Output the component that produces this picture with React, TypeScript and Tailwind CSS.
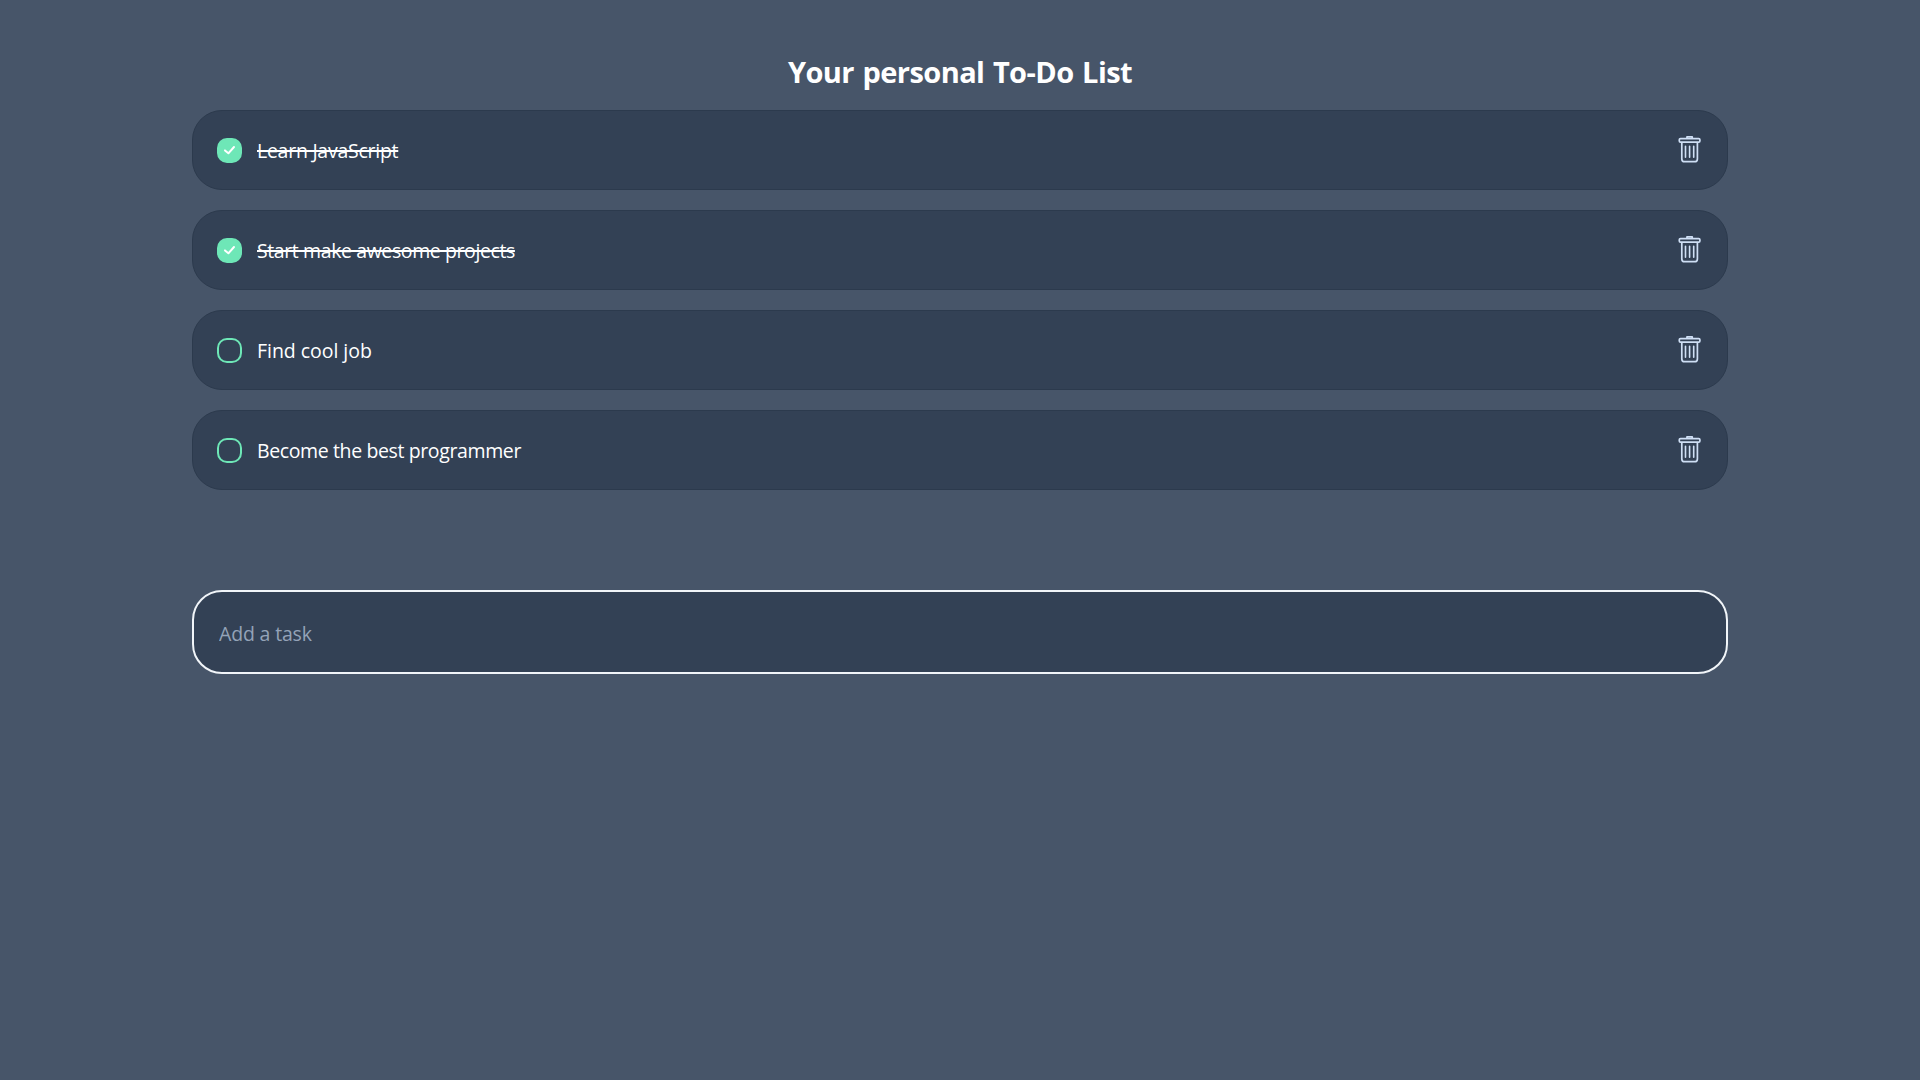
const tasks = [
  { title: "Learn JavaScript", done: true, spacing: "tracking-[-0.26px]" },
  { title: "Start make awesome projects", done: true, spacing: "tracking-[-0.4px]" },
  { title: "Find cool job", done: false, spacing: "tracking-[-0.04px]" },
  { title: "Become the best programmer", done: false, spacing: "tracking-[-0.38px]" },
];

function Checkbox({ done }: { done: boolean }) {
  return (
    <span
      className={
        "flex h-[25px] w-[25px] shrink-0 items-center justify-center rounded-[10px] border-2 border-[#6ee7b7] " +
        (done ? "bg-[#6ee7b7]" : "")
      }
    >
      {done && (
        <svg width="21" height="21" viewBox="0 0 21 21" fill="none" stroke="white" strokeWidth="2" strokeLinecap="round" strokeLinejoin="round">
          <path d="M6 10.4 9.4 13.3 15 7" />
        </svg>
      )}
    </span>
  );
}

function TrashIcon() {
  return (
    <svg className="shrink-0" width="24" height="30" viewBox="0 0 24 30" fill="none" stroke="#cfdff5" strokeLinecap="round" strokeLinejoin="round">
      <path d="M9 2.7V1.8h5.2v.9" strokeWidth="1.8" />
      <rect x="1.3" y="3.6" width="20.6" height="3.6" rx="1.2" strokeWidth="1.7" />
      <path d="M3.8 7.8v16.1q0 2.8 2.8 2.8h10q2.8 0 2.8-2.8V7.8" strokeWidth="1.7" />
      <path d="M7.5 11.2v11M11.6 11.2v11M15.7 11.2v11" strokeWidth="1.6" />
    </svg>
  );
}

export default function App() {
  return (
    <main className="min-h-screen bg-[#475569] pt-[51px] font-['Open_Sans','Noto_Sans',sans-serif] text-white">
      <div className="mx-auto w-[1536px]">
        <h1 className="mb-[17px] h-[42px] text-center text-[29px] leading-[42px] font-bold tracking-[-0.56px] whitespace-nowrap [word-spacing:1.5px]">
          Your personal To-Do List
        </h1>
        <ul className="flex flex-col gap-5">
          {tasks.map((task) => (
            <li key={task.title} className="flex h-20 items-center justify-between rounded-[30px] border border-[#2c3a4d] bg-[#334155] pr-[25px] pl-6">
              <div className="flex items-center gap-[15px]">
                <Checkbox done={task.done} />
                <span className={"pt-[2px] text-[19.5px] leading-[30px] whitespace-nowrap " + task.spacing + (task.done ? " line-through decoration-2" : "")}>
                  {task.title}
                </span>
              </div>
              <TrashIcon />
            </li>
          ))}
        </ul>
        <input
          className="mt-[100px] block h-[84px] w-full rounded-[30px] border-2 border-[#f1f5f9] bg-[#334155] px-[25px] pt-[2px] text-[19.5px] tracking-[-0.17px] outline-none placeholder:text-[#94a3b8]"
          placeholder="Add a task"
          aria-label="Add a task"
        />
      </div>
    </main>
  );
}
